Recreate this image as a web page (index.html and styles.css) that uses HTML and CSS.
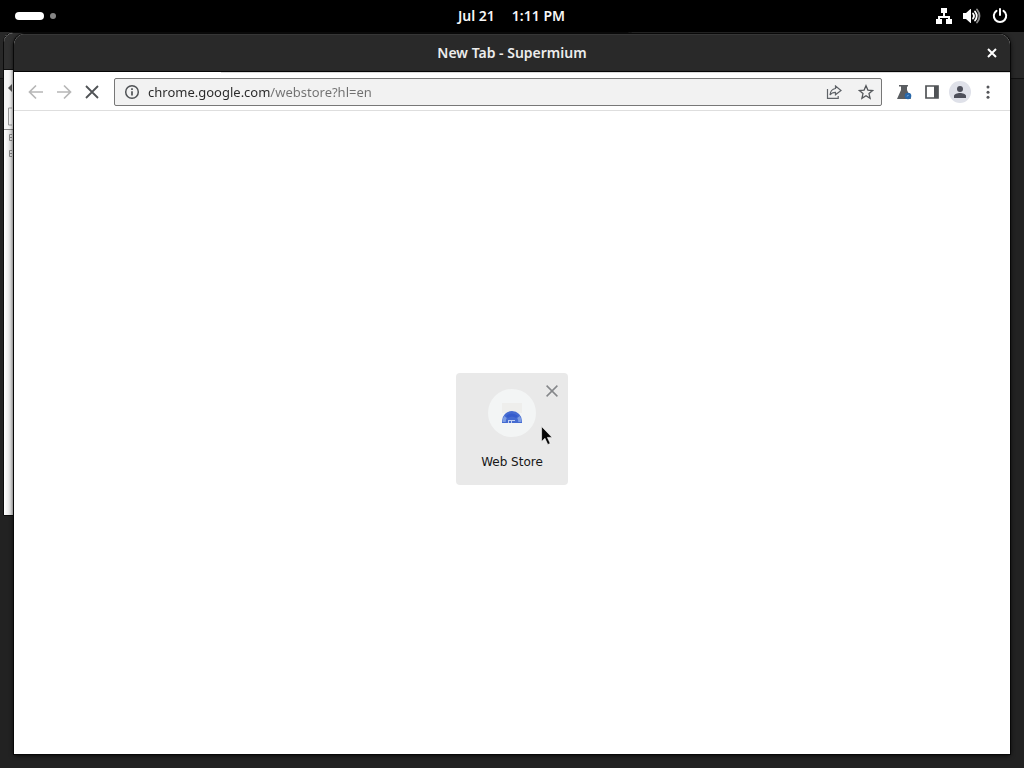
FILE: index.html
```html
<!DOCTYPE html>
<html lang="en">
<head>
<meta charset="utf-8">
<title>New Tab - Supermium</title>
<link rel="stylesheet" href="styles.css">
</head>
<body>
<header class="topbar">
  <button class="workspaces" aria-label="Activities"><span class="pill"></span><span class="dot"></span></button>
  <button class="clock"><span>Jul 21</span><span>1:11 PM</span></button>
  <button class="status" aria-label="System menu">
    <svg width="16" height="16" viewBox="0 0 16 16" fill="#fff"><path d="M5 0h6v5H9v3h5v3h2v5h-6v-5h2v-1H4v1h2v5H0v-5h2V8h5V5H5z"/></svg>
    <svg width="18" height="16" viewBox="0 0 18 16" fill="none" stroke="#fff" stroke-width="1.8" stroke-linecap="round"><path fill="#fff" stroke="none" d="M0 5h3l4.500-4h.5v14h-.5L3 11H0z"/><path d="M10 5.500q2 2.500 0 5M12 3.500q3.500 4.500 0 9"/><path opacity=".55" d="M14 1.500q5 6.500 0 13"/></svg>
    <svg width="16" height="16" viewBox="0 0 16 16" fill="none" stroke="#fff" stroke-width="2" stroke-linecap="round"><path d="M8 1v6M4.500 2.800a6.200 6.200 0 1 0 7 0"/></svg>
  </button>
</header>
<main class="desktop">
  <div class="far-window"></div>
  <section class="back-window" aria-hidden="true">
    <div class="back-title"></div>
    <div class="back-tools"><svg width="8" height="58" viewBox="0 0 8 58" fill="none"><path d="M8 14L4 18l4 4" fill="#555"/><path d="M8 38H4.500v17H8" stroke="#999"/></svg></div>
    <div class="back-tree"><svg width="8" height="30" viewBox="0 0 8 30" fill="none" stroke="#888"><path d="M8 4.500H5.500v6H8M6 7.500h2M8 20.500H5.500v6H8M6 23.500h2"/></svg></div>
  </section>
  <section class="window">
    <div class="titlebar">
      <h1 class="title">New Tab - Supermium</h1>
      <button class="close" aria-label="Close window"><svg width="10" height="10" viewBox="0 0 10 10" stroke="#fff" stroke-width="2"><path d="M1 1l8 8M9 1L1 9"/></svg></button>
    </div>
    <div class="toolbar">
      <div class="nav">
        <button class="tool" aria-label="Back"><svg width="16" height="16" viewBox="0 0 16 16" fill="none" stroke="#b7b7b7" stroke-width="1.700"><path d="M15 8H2M8 1.500L1.500 8 8 14.500"/></svg></button>
        <button class="tool" aria-label="Forward"><svg width="16" height="16" viewBox="0 0 16 16" fill="none" stroke="#b7b7b7" stroke-width="1.700"><path d="M1 8h13M8 1.500L14.500 8 8 14.500"/></svg></button>
        <button class="tool" aria-label="Stop"><svg width="16" height="16" viewBox="0 0 16 16" fill="none" stroke="#505356" stroke-width="1.800"><path d="M2 2l12 12M14 2L2 14"/></svg></button>
      </div>
      <div class="omnibox">
        <button class="tool info" aria-label="Site information"><svg width="16" height="16" viewBox="0 0 16 16" fill="none" stroke="#505356" stroke-width="1.500"><circle cx="8" cy="8" r="6.300"/><path d="M8 7.200v4.300M8 4.200v1.700" stroke-width="1.700"/></svg></button>
        <input class="url" type="text" aria-label="Address" value="chrome.google.com/webstore?hl=en" spellcheck="false">
        <button class="tool" aria-label="Share"><svg width="16" height="16" viewBox="0 0 16 16" fill="none" stroke="#5f6368" stroke-width="1.200"><path d="M1.500 5v9.400h10.700V12M9.500 2l5.500 4.500-5.500 4.200V8.300C7 8.300 5.300 9 4 11c.3-3.800 2.300-6 5.500-6.500z"/></svg></button>
        <button class="tool" aria-label="Bookmark"><svg width="16" height="16" viewBox="0 0 16 16" fill="none" stroke="#55585c" stroke-width="1.300"><path d="M8 1.700l1.900 4.400 4.700.4-3.600 3.100 1.100 4.700L8 11.800l-4.100 2.500L5 9.600 1.400 6.500l4.700-.4z"/></svg></button>
      </div>
      <div class="actions">
        <button class="tool" aria-label="Experiments"><svg width="16" height="16" viewBox="0 0 16 16"><path fill="#5a5d61" d="M3 1h9v1.500h-1V6l4 9H1l4-9V2.500H3z"/><circle cx="12" cy="12" r="3.300" fill="#2767aa"/><path d="M10.800 12.200l1.900-1" fill="none" stroke="#8dbbe8" stroke-width=".8"/></svg></button>
        <button class="tool" aria-label="Side panel"><svg width="16" height="16" viewBox="0 0 16 16"><path fill="none" stroke="#505356" stroke-width="1.700" d="M2 2h12v12H2z"/><path fill="#505356" d="M10 2h4v12h-4z"/></svg></button>
        <button class="tool profile" aria-label="Profile"><svg width="22" height="22" viewBox="0 0 22 22"><circle cx="11" cy="11" r="11" fill="#dfe1e9"/><circle cx="11" cy="8" r="3" fill="#4e505b"/><path fill="#4e505b" d="M5 17v-2c0-2 3.500-3 6-3s6 1 6 3v2z"/></svg></button>
        <button class="tool" aria-label="Menu"><svg width="16" height="16" viewBox="0 0 16 16" fill="#55565a"><circle cx="8" cy="3" r="1.500"/><circle cx="8" cy="8.200" r="1.500"/><circle cx="8" cy="13.300" r="1.500"/></svg></button>
      </div>
    </div>
    <div class="page">
      <div class="tile">
        <a class="shortcut" href="#webstore">
          <span class="favicon"><svg width="24" height="24" viewBox="0 0 24 24"><path fill="#eeeeec" d="M2 2h20v10H2z"/><path fill="#456bd1" d="M2 22v-2a10 10 0 0 1 20 0v2z"/><path fill="#7d9de4" d="M2.500 21q0-4 1.700-6l2.500 2q-1 2-1 4H2.500zM21.500 21q0-4-1.700-6l-2.500 2q1 2 1 4h3.200z"/><path fill="#365ccd" d="M6 15q6-5 12 0l-2 2q-4-3-8 0z"/><path fill="#c0cff1" d="M8 19h7v1h-3v2h-1v-2H9v2H8z"/></svg></span>
          <span class="label">Web Store</span>
        </a>
        <button class="remove" aria-label="Remove shortcut"><svg width="12" height="12" viewBox="0 0 12 12" fill="none" stroke="#85878a" stroke-width="1.500"><path d="M.6.600l10.800 10.800M11.400.600L.6 11.400"/></svg></button>
        <svg class="pointer" width="12" height="20" viewBox="0 0 12 20"><path d="M.6.600v15l3.300-3.300 2.900 6.200 2.400-1.100-2.800-6h4.700z" fill="#050505" stroke="#fff" stroke-width=".6"/></svg>
      </div>
    </div>
  </section>
</main>
</body>
</html>
```
FILE: styles.css
```css
* { box-sizing: border-box; }
html, body { height: 100%; }
body {
  margin: 0;
  display: flex;
  flex-direction: column;
  overflow: hidden;
  background: #222;
  font-family: "Noto Sans", "Open Sans", sans-serif;
}
button { border: 0; padding: 0; background: none; font: inherit; color: inherit; }
svg { display: block; flex: none; }

.topbar {
  display: grid;
  grid-template-columns: 1fr auto 1fr;
  align-items: center;
  height: 32px;
  padding: 0 16px 1px 15px;
  background: #000;
  color: #f6f6f6;
  font-size: 14px;
  font-weight: 600;
}
.workspaces { display: flex; align-items: center; gap: 6px; justify-self: start; }
.pill { width: 29px; height: 8px; border-radius: 4px; background: #fff; }
.dot { width: 6px; height: 6px; border-radius: 50%; background: #858585; }
.clock { display: flex; gap: 17px; }
.status { display: flex; align-items: center; gap: 11px; justify-self: end; }

.desktop { position: relative; flex: 1; }
.far-window {
  position: absolute;
  inset: 0 0 auto 0;
  height: 47px;
  background: #282828;
  border-bottom: 1px solid #111;
}
.back-window {
  position: absolute;
  left: 3px;
  top: 0;
  width: 62%;
  height: 484px;
  display: flex;
  flex-direction: column;
  border: 1px solid #0b0b0b;
  border-radius: 10px 10px 0 0;
  background: #eee;
  overflow: hidden;
}
.back-title { height: 37px; background: #303030; border-bottom: 1px solid #111; }
.back-tools { height: 60px; border-bottom: 1px solid #888; background: #f5f5f5; }
.back-tree { flex: 1; background: linear-gradient(90deg, #fff, #d5d5d5 10px); }

.window {
  position: absolute;
  inset: 2px 14px 14px 14px;
  display: flex;
  flex-direction: column;
  border-radius: 11px 11px 0 0;
  background: #fff;
  box-shadow: 0 0 0 1px #080808, 0 1px 5px #000;
  overflow: hidden;
}
.titlebar {
  display: grid;
  grid-template-columns: 1fr auto 1fr;
  align-items: center;
  height: 38px;
  background: #292929;
  border-top: 1px solid #363636;
  border-bottom: 1px solid #050505;
  color: #ececec;
}
.title { grid-column: 2; margin: 0; font-size: 14px; font-weight: 600; line-height: 20px; }
.close { justify-self: end; padding: 4px 13px; }

.toolbar {
  display: flex;
  align-items: center;
  gap: 8px;
  height: 39px;
  padding: 2px 8px 0;
  border-bottom: 1px solid #dedede;
  background: linear-gradient(#dadada, #dadada) 207px 0 / 100% 1px no-repeat;
}
.nav, .actions { display: flex; }
.tool {
  display: flex;
  align-items: center;
  justify-content: center;
  width: 28px;
  height: 28px;
}
.omnibox {
  display: flex;
  align-items: center;
  gap: 4px;
  flex: 1;
  min-width: 0;
  height: 28px;
  padding: 0 1px 0 3px;
  border: 1px solid #777;
  border-radius: 2px;
  background: #f2f2f2;
}
.info { margin-right: -2px; }
.url {
  flex: 1;
  min-width: 0;
  height: 24px;
  padding: 0;
  border: 0;
  outline: 0;
  background: linear-gradient(90deg, #292929 122px, #707070 122px);
  background-clip: text;
  color: transparent;
  font-family: "Noto Sans", sans-serif;
  font-size: 13px;
}

.page { flex: 1; display: flex; align-items: center; justify-content: center; padding-bottom: 8px; }
.tile { position: relative; width: 112px; height: 112px; border-radius: 4px; background: #e9e9e9; }
.shortcut {
  display: flex;
  flex-direction: column;
  align-items: center;
  gap: 15px;
  padding-top: 16px;
  color: #171717;
  text-decoration: none;
}
.favicon {
  display: flex;
  align-items: center;
  justify-content: center;
  width: 48px;
  height: 48px;
  border-radius: 50%;
  background: #f3f5f5;
}
.label { font-family: "DejaVu Sans", sans-serif; font-size: 12px; line-height: 20px; }
.remove { position: absolute; top: 12px; right: 10px; }
.pointer { position: absolute; left: 85px; top: 53px; }
```
